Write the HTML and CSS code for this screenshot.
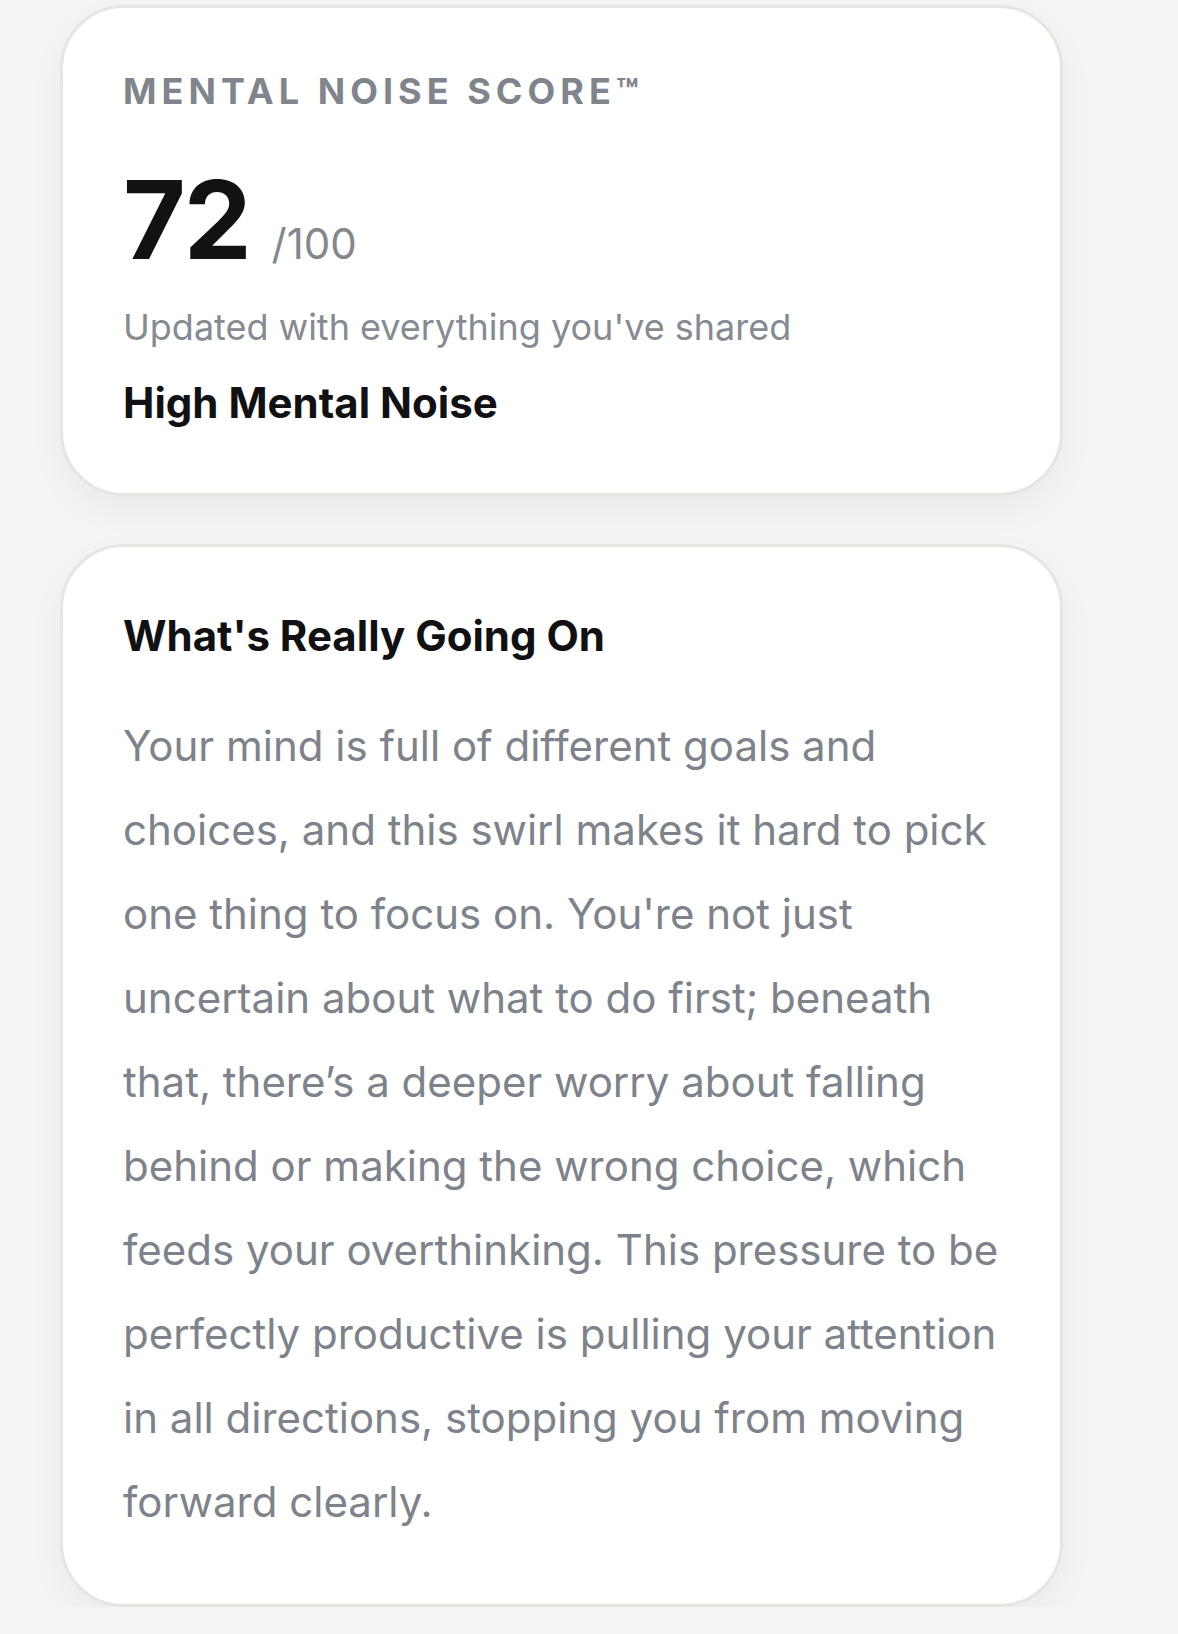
FILE: index.html
```html
<!DOCTYPE html>
<html lang="en">
<head>
  <meta charset="UTF-8">
  <meta name="viewport" content="width=device-width, initial-scale=1.0">
  <title>Mental Noise Score</title>
  <link rel="stylesheet" href="styles.css">
</head>
<body>
  <div id="results">
    <div class="card score-card">
      <div class="label">Mental Noise Score&trade;</div>
      <div class="score">
        <span class="value">72</span>
        <span class="max">/100</span>
      </div>
      <div class="updated">Updated with everything you've shared</div>
      <div class="level">High Mental Noise</div>
    </div>

    <div class="card insight-card">
      <h2 class="title">What's Really Going On</h2>
      <p class="body">Your mind is full of different goals and choices, and this swirl makes it hard to pick one thing to focus on. You're not just uncertain about what to do first; beneath that, there’s a deeper worry about falling behind or making the wrong choice, which feeds your overthinking. This pressure to be perfectly productive is pulling your attention in all directions, stopping you from moving forward clearly.</p>
    </div>
  </div>
</body>
</html>
```

FILE: styles.css
```css
body {
  margin: 0;
  background: #f5f4f2;
  font-family: 'Inter', 'Noto Sans', sans-serif;
  color: #111113;
}
#results {
  width: 1003px;
  margin-left: 60px;
  padding-top: 5px;
  display: flex;
  flex-direction: column;
  gap: 48px;
}
.card {
  background-color: #fff;
  border: 3px solid #e6e5e2;
  border-radius: 64px;
  padding: 60px;
  box-shadow: 0px 14px 36px rgba(0, 0, 0, 0.045);
}
.score-card {
  padding-top: 62px;
  padding-bottom: 64px;
}
.label {
  font-size: 36px;
  line-height: 1.2;
  font-weight: 700;
  letter-spacing: 0.14em;
  text-transform: uppercase;
  color: #80848c;
}
.score {
  display: flex;
  align-items: baseline;
  gap: 22px;
  margin-top: 53px;
}
.value {
  font-size: 108px;
  line-height: 1;
  font-weight: 700;
  letter-spacing: -0.02em;
  color: #121214;
}
.max {
  font-size: 42px;
  font-weight: 400;
  color: #83878e;
}
.updated {
  margin-top: 32px;
  font-size: 36px;
  line-height: 1.2;
  color: #868a92;
}
.level {
  margin-top: 29px;
  font-size: 42px;
  line-height: 1.2;
  font-weight: 700;
  color: #111113;
}
.title {
  margin: 0 0 38px;
  font-size: 42px;
  line-height: 1.4;
  font-weight: 700;
  color: #111113;
}
.body {
  margin: 0;
  font-size: 42px;
  line-height: 84px;
  color: #7d828b;
}
```
